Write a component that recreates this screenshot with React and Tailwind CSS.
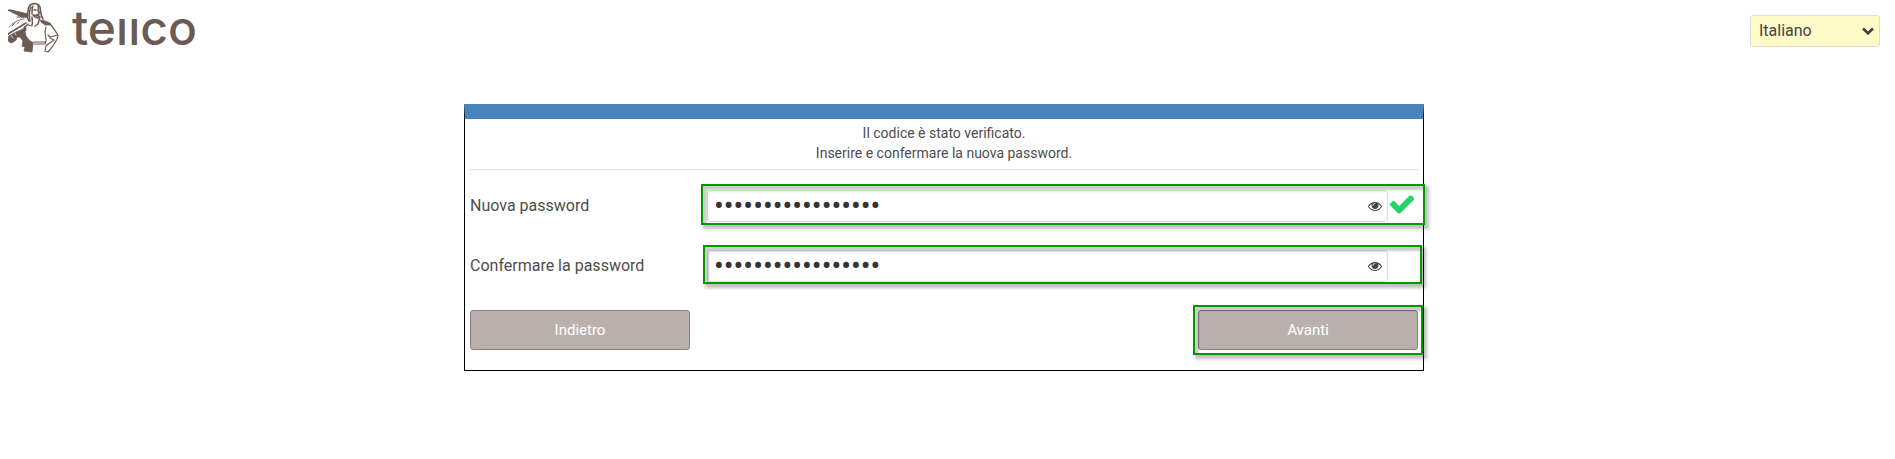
import { useState } from 'react';

const EYE_PATH = 'M1664 960q-152-236-381-353 61 104 61 225 0 185-131.5 316.5t-316.5 131.5-316.5-131.5-131.5-316.5q0-121 61-225-229 117-381 353 133 205 333.5 326.5t434.5 121.5 434.5-121.5 333.5-326.5zm-720-384q0-20-14-34t-34-14q-125 0-214.5 89.5t-89.5 214.5q0 20 14 34t34 14 34-14 14-34q0-86 61-147t147-61q20 0 34-14t14-34zm848 384q0 34-20 69-140 230-376.5 368.5t-499.5 138.5-499.5-139-376.5-368q-20-35-20-69t20-69q140-229 376.5-368t499.5-139 499.5 139 376.5 368q20 35 20 69z';
const CHECK_PATH = 'M1671 566q0 40-28 68l-724 724-136 136q-28 28-68 28t-68-28l-136-136-362-362q-28-28-28-68t28-68l136-136q28-28 68-28t68 28l294 295 656-657q28-28 68-28t68 28l136 136q28 28 28 68z';

function Archer() {
  return (
    <svg viewBox="8 0 54 54" className="w-[54px] h-[54px] shrink-0" fill="none" stroke="#6b5b54" strokeLinecap="round" strokeLinejoin="round" aria-hidden="true">
      {/* crossbow over the shoulder */}
      <path d="M8 10l3 0 17 4v3l-6 0z" fill="#6b5b54" strokeWidth="1" />
      <path d="M17 17l9 0" strokeWidth="1.2" />
      <path d="M9 27c4-4 8-7 15-8M15 23l-3 3M19 22l-2 2" strokeWidth="0.8" />
      <path d="M8 34l18-11" strokeWidth="1.6" />
      <path d="M9 36l5-3 9-4 2-3 1 1-1 5 1 4 3 4 4 3-1 9-8-1 1-4-3-1 1-5-3-4-3 0-1 3-4 3-3-1-1-3z" fill="#6b5b54" strokeWidth="0.8" />
      <path d="M11 35l2 3M15 33l1 2" stroke="#fff" strokeWidth="0.7" />
      {/* hair, face and beard */}
      <path d="M29 21c-2-3-2-6-1-9 0-4 1-7 4-8 3-1 7 0 8 3 1 4 0 8 3 12" strokeWidth="1.6" />
      <path d="M31 7c-2 4-2 9-1 14M33 6c-1 2-1 5-1 8M38 6l1 7" strokeWidth="1.5" />
      <path d="M34 10l2 0M38 10l1 4-2 1M33 15l6 1-1 2-3-1zM32 17c0 3 1 5 0 8M40 17l-2 7-3 2" strokeWidth="1.5" />
      <path d="M41 20l4 1 5 2 1 2-6 0-4-3z" fill="#6b5b54" strokeWidth="0.8" />
      {/* shirt, arm and belt */}
      <path d="M28 24l-3 3 1 3M28 25l4 1M33 42l12 0M34 44l11 0 1-3M46 27l-1 5 1 8" strokeWidth="1.2" />
      <path d="M51 25c2 2 4 6 7 10l-8 2-2-2M58 35c0 4-3 9-10 17l-3-1 1-5M50 38l4 2-7 5M45 51l1-5 2-2" strokeWidth="1.2" />
    </svg>
  );
}

function Highlight({ className }) {
  return (
    <span
      aria-hidden="true"
      className={`absolute pointer-events-none border-2 border-[#009a00] shadow-[3px_3px_3px_1px_rgba(0,0,0,0.25),inset_3px_3px_2px_1px_rgba(0,0,0,0.2)] ${className}`}
    />
  );
}

function PasswordRow({ id, label, valid = false, highlight }) {
  const [value, setValue] = useState('Apfelschuss-1307!');
  const [visible, setVisible] = useState(false);
  return (
    <div className="relative flex items-center mb-7">
      <label htmlFor={id} className="w-1/4 text-base text-[#4d4d4d]">{label}</label>
      <div className="relative flex-1">
        <input
          id={id}
          type={visible ? 'text' : 'password'}
          value={value}
          onChange={e => setValue(e.target.value)}
          className={`block w-full h-8 pr-8 text-[#333] bg-white border border-[#ddd] rounded-[3px] shadow-[inset_0_1px_2px_rgba(0,0,0,0.08)] outline-none ${visible ? 'pl-2 text-base' : 'pl-[6px] pt-[2px] text-[29px]'}`}
        />
        <button
          type="button"
          aria-label="Mostra password"
          onClick={() => setVisible(!visible)}
          className="absolute right-px top-1 size-6 flex items-center justify-center text-[#444]"
        >
          <svg viewBox="0 0 1792 1792" className="size-[14px]" fill="currentColor"><path d={EYE_PATH} /></svg>
        </button>
      </div>
      <div className="w-[30px] h-8 shrink-0">
        {valid && <svg viewBox="0 0 1792 1792" className="size-7" fill="#26d465"><path d={CHECK_PATH} /></svg>}
      </div>
      <Highlight className={highlight} />
    </div>
  );
}

function FormButton({ children }) {
  return (
    <button
      type="button"
      className="w-[220px] h-10 text-[15px] text-white bg-[#bab1ae] border border-[#8a7d77] rounded-[3px]"
    >
      {children}
    </button>
  );
}

export default function App() {
  return (
    <div className="min-h-screen bg-white font-['Roboto',sans-serif] text-[#4d4d4d]">
      <header className="flex items-start justify-between h-14 pl-2 pr-[15px]">
        <a href="#" aria-label="Tellco" className="flex items-start">
          <Archer />
          <span className="pl-[10px] font-['Inter',sans-serif] font-medium text-[48px] leading-[56px] text-[#6b5b54]">teııco</span>
        </a>
        <div className="relative mt-[15px]">
          <select
            aria-label="Lingua"
            defaultValue="it"
            className="appearance-none block w-[130px] h-8 pl-2 pr-6 text-base text-[#444] bg-[#fffbc8] border border-[#ddd] rounded-[3px]"
          >
            <option value="de">Deutsch</option>
            <option value="fr">Français</option>
            <option value="it">Italiano</option>
            <option value="en">English</option>
          </select>
          <svg viewBox="0 0 12 8" className="absolute right-[6px] top-3 w-3 h-2 pointer-events-none" fill="none" stroke="#444" strokeWidth="2.800" aria-hidden="true">
            <path d="M1 1.500l5 4.700 5-4.700" />
          </svg>
        </div>
      </header>

      <main className="pt-12 pr-[7px]">
        <form className="max-w-[960px] mx-auto px-[5px] pb-5 border border-t-[15px] border-black border-t-[#4a83ba]">
          <p className="pt-1 pb-[6px] mb-5 text-sm text-center border-b border-[#ddd]">
            Il codice è stato verificato.<br />
            Inserire e confermare la nuova password.
          </p>
          <PasswordRow id="new-password" label="Nuova password" valid highlight="left-[231px] -right-[7px] -top-[6px] -bottom-[3px]" />
          <PasswordRow id="confirm-password" label="Confermare la password" highlight="left-[233px] -right-1 -top-[5px] -bottom-[2px]" />
          <div className="flex justify-between">
            <FormButton>Indietro</FormButton>
            <div className="relative">
              <FormButton>Avanti</FormButton>
              <Highlight className="-inset-[5px]" />
            </div>
          </div>
        </form>
      </main>
    </div>
  );
}
